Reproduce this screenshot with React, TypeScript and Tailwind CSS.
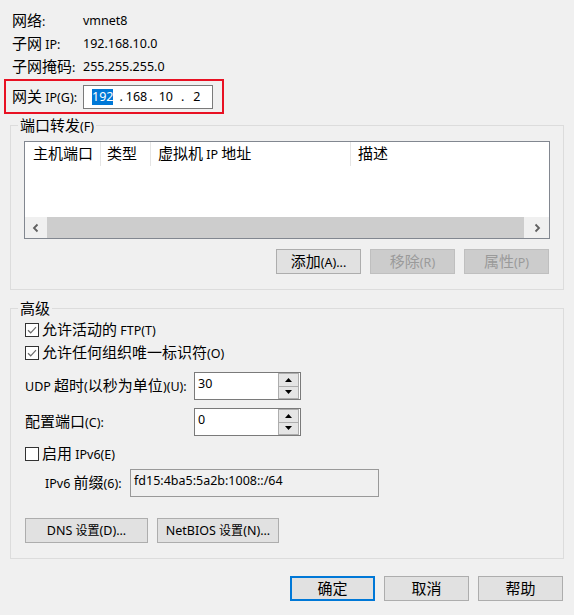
import React from 'react';

// Chinese runs are drawn a bit larger than the Latin ones, like the original dialog font
const CJK = /([\u3400-\u9fff\uff00-\uffef]+)/;

function Zh({ text, small = false }: { text: string; small?: boolean }) {
  const parts = text.split(CJK).filter((p) => p !== '');
  return (
    <span>
      {parts.map((p, i) =>
        CJK.test(p) ? (
          <span key={i} className={small ? 'text-[12px]' : 'text-[15px]'}>
            {p}
          </span>
        ) : (
          <span key={i} className="whitespace-pre">
            {p}
          </span>
        )
      )}
    </span>
  );
}

const Button = ({
  label,
  width = 'w-[85px]',
  disabled = false,
  focused = false,
  small = false,
}: {
  label: string;
  width?: string;
  disabled?: boolean;
  focused?: boolean;
  small?: boolean;
}) => (
  <div
    className={`${width} h-[25px] flex items-center justify-center ${
      disabled
        ? 'bg-[#cccccc] border border-[#bfbfbf] text-[#9a9a9a]'
        : focused
        ? 'bg-[#e1e1e1] border-2 border-[#0078d7]'
        : 'bg-[#e1e1e1] border border-[#adadad]'
    }`}
  >
    <Zh text={label} small={small} />
  </div>
);

const Checkbox = ({ label, checked }: { label: string; checked: boolean }) => (
  <div className="h-[20px] flex items-center gap-[3px]">
    <div className="w-[14px] h-[14px] border border-[#333333] bg-white flex items-center justify-center">
      {checked && (
        <svg width="12" height="12" viewBox="0 0 12 12">
          <path d="M2 6.2 L4.7 8.8 L10 3.2" fill="none" stroke="#6b6b6b" strokeWidth="1.2" />
        </svg>
      )}
    </div>
    <Zh text={label} />
  </div>
);

const Spinner = ({ label, value }: { label: string; value: string }) => (
  <div className="h-[28px] flex items-center">
    <div className="w-[169px]">
      <Zh text={label} />
    </div>
    <div className="w-[107px] h-[28px] border border-[#7a7a7a] bg-white flex">
      <div className="flex-1 pl-[3px] pt-[3px]">{value}</div>
      <div className="w-[21px] mr-[1px] flex flex-col">
        <div className="flex-1 bg-[#e5e5e5] border border-[#adadad] flex items-center justify-center">
          <svg width="7" height="4" viewBox="0 0 7 4">
            <path d="M0 4 L3.5 0 L7 4Z" fill="#000" />
          </svg>
        </div>
        <div className="flex-1 bg-[#e5e5e5] border border-t-0 border-[#adadad] flex items-center justify-center">
          <svg width="7" height="4" viewBox="0 0 7 4">
            <path d="M0 0 L7 0 L3.5 4Z" fill="#000" />
          </svg>
        </div>
      </div>
    </div>
  </div>
);

const Chevron = ({ dir }: { dir: 'left' | 'right' }) => (
  <svg width="8" height="10" viewBox="0 0 8 10">
    <path
      d={dir === 'left' ? 'M5.5 1.5 L2 5 L5.5 8.5' : 'M2.5 1.5 L6 5 L2.5 8.5'}
      fill="none"
      stroke="#606060"
      strokeWidth="1.8"
    />
  </svg>
);

export default function App() {
  const info = [
    ['网络:', 'vmnet8'],
    ['子网 IP:', '192.168.10.0'],
    ['子网掩码:', '255.255.255.0'],
  ];

  return (
    <div className="w-[574px] h-[615px] overflow-hidden bg-[#f0f0f0] text-black text-[12.5px] leading-[16px] font-['Noto_Sans','Noto_Sans_CJK_SC',sans-serif]">
      <div className="pt-[9px] pl-[12px]">
        {info.map(([k, v]) => (
          <div key={k} className="h-[23px] flex items-center">
            <div className="w-[71px]">
              <Zh text={k} />
            </div>
            <div>{v}</div>
          </div>
        ))}
      </div>

      {/* gateway, framed in red in the screenshot */}
      <div className="ml-[4px] mt-[1px] w-[220px] h-[35px] border-2 border-[#e81123] flex items-center pl-[6px]">
        <div className="w-[71px]">
          <Zh text="网关 IP(G):" />
        </div>
        <div className="w-[130px] h-[24px] border border-[#7a7a7a] bg-white flex items-center">
          <span className="ml-[8px] bg-[#0078d7] text-white">192</span>
          <span className="ml-[6px]">.</span>
          <span className="ml-[3px]">168</span>
          <span className="ml-[2px]">.</span>
          <span className="ml-[6px]">10</span>
          <span className="ml-[8px]">.</span>
          <span className="ml-[9px]">2</span>
        </div>
      </div>

      {/* port forwarding */}
      <div className="relative mx-[10px] mt-[11px] border border-[#dcdcdc] pt-[15px] px-[13px] pb-[15px]">
        <span className="absolute -top-[9px] left-[7px] px-[2px] bg-[#f0f0f0]">
          <Zh text="端口转发(F)" />
        </span>
        <div className="h-[98px] border border-[#828790] bg-white flex flex-col">
          <div className="h-[24px] flex">
            <div className="w-[76px] pl-[8px] border-r border-[#e5e5e5] flex items-center">
              <Zh text="主机端口" />
            </div>
            <div className="w-[50px] pl-[6px] border-r border-[#e5e5e5] flex items-center">
              <Zh text="类型" />
            </div>
            <div className="w-[200px] pl-[7px] border-r border-[#e5e5e5] flex items-center">
              <Zh text="虚拟机 IP 地址" />
            </div>
            <div className="flex-1 pl-[7px] flex items-center">
              <Zh text="描述" />
            </div>
          </div>
          <div className="flex-1" />
          <div className="h-[21px] bg-[#f0f0f0] flex">
            <div className="w-[22px] flex items-center justify-center">
              <Chevron dir="left" />
            </div>
            <div className="flex-1 bg-[#cdcdcd]" />
            <div className="w-[25px] flex items-center justify-center">
              <Chevron dir="right" />
            </div>
          </div>
        </div>
        <div className="mt-[10px] pr-[1px] flex justify-end gap-[9px]">
          <Button label="添加(A)..." />
          <Button label="移除(R)" disabled />
          <Button label="属性(P)" disabled />
        </div>
      </div>

      {/* advanced */}
      <div className="relative mx-[10px] mt-[18px] border border-[#dcdcdc] pt-[11px] pl-[14px] pb-[15px]">
        <span className="absolute -top-[9px] left-[7px] px-[2px] bg-[#f0f0f0]">
          <Zh text="高级" />
        </span>
        <Checkbox label="允许活动的 FTP(T)" checked />
        <div className="mt-[3px]">
          <Checkbox label="允许任何组织唯一标识符(O)" checked />
        </div>
        <div className="mt-[9px]">
          <Spinner label="UDP 超时(以秒为单位)(U):" value="30" />
        </div>
        <div className="mt-[8px]">
          <Spinner label="配置端口(C):" value="0" />
        </div>
        <div className="mt-[8px]">
          <Checkbox label="启用 IPv6(E)" checked={false} />
        </div>
        <div className="mt-[5px] h-[28px] flex items-center">
          <div className="ml-[20px] w-[85px]">
            <Zh text="IPv6 前缀(6):" />
          </div>
          <div className="w-[249px] h-[28px] border border-[#999999] bg-[#f0f0f0] pl-[3px] pt-[3px]">
            fd15:4ba5:5a2b:1008::/64
          </div>
        </div>
        <div className="mt-[21px] flex gap-[9px]">
          <Button label="DNS 设置(D)..." width="w-[123px]" small />
          <Button label="NetBIOS 设置(N)..." width="w-[122px]" small />
        </div>
      </div>

      <div className="mt-[17px] pr-[11px] flex justify-end gap-[9px]">
        <Button label="确定" focused />
        <Button label="取消" />
        <Button label="帮助" />
      </div>
    </div>
  );
}
